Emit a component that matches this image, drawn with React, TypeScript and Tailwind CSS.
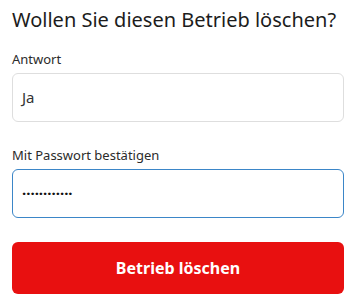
import React from "react";

export default function App() {
  return (
    <div className="w-[356px] h-[308px] bg-white px-3 pt-[6px]" style={{ fontFamily: '"Noto Sans", sans-serif' }}>
      <h2 className="text-[20px] leading-[28px] text-[#1c1c1c] font-normal">Wollen Sie diesen Betrieb löschen?</h2>
      <div className="mt-[16px] text-[13px] leading-[18px] text-[#2b2b2b]">Antwort</div>
      <div className="mt-[5px] h-[49px] border border-[#dedede] rounded-[6px] flex items-center pl-[9px] text-[15px] text-[#333]">Ja</div>
      <div className="mt-[24px] text-[13px] leading-[18px] text-[#2b2b2b]">Mit Passwort bestätigen</div>
      <div className="mt-[5px] h-[49px] border border-[#3b86c8] rounded-[6px] flex items-center pl-[9px] text-[15px] text-[#111] font-bold">············</div>
      <button className="mt-[24px] w-full h-[52px] rounded-[6px] bg-[#e81010] text-white text-[16px] font-bold">Betrieb löschen</button>
    </div>
  );
}
